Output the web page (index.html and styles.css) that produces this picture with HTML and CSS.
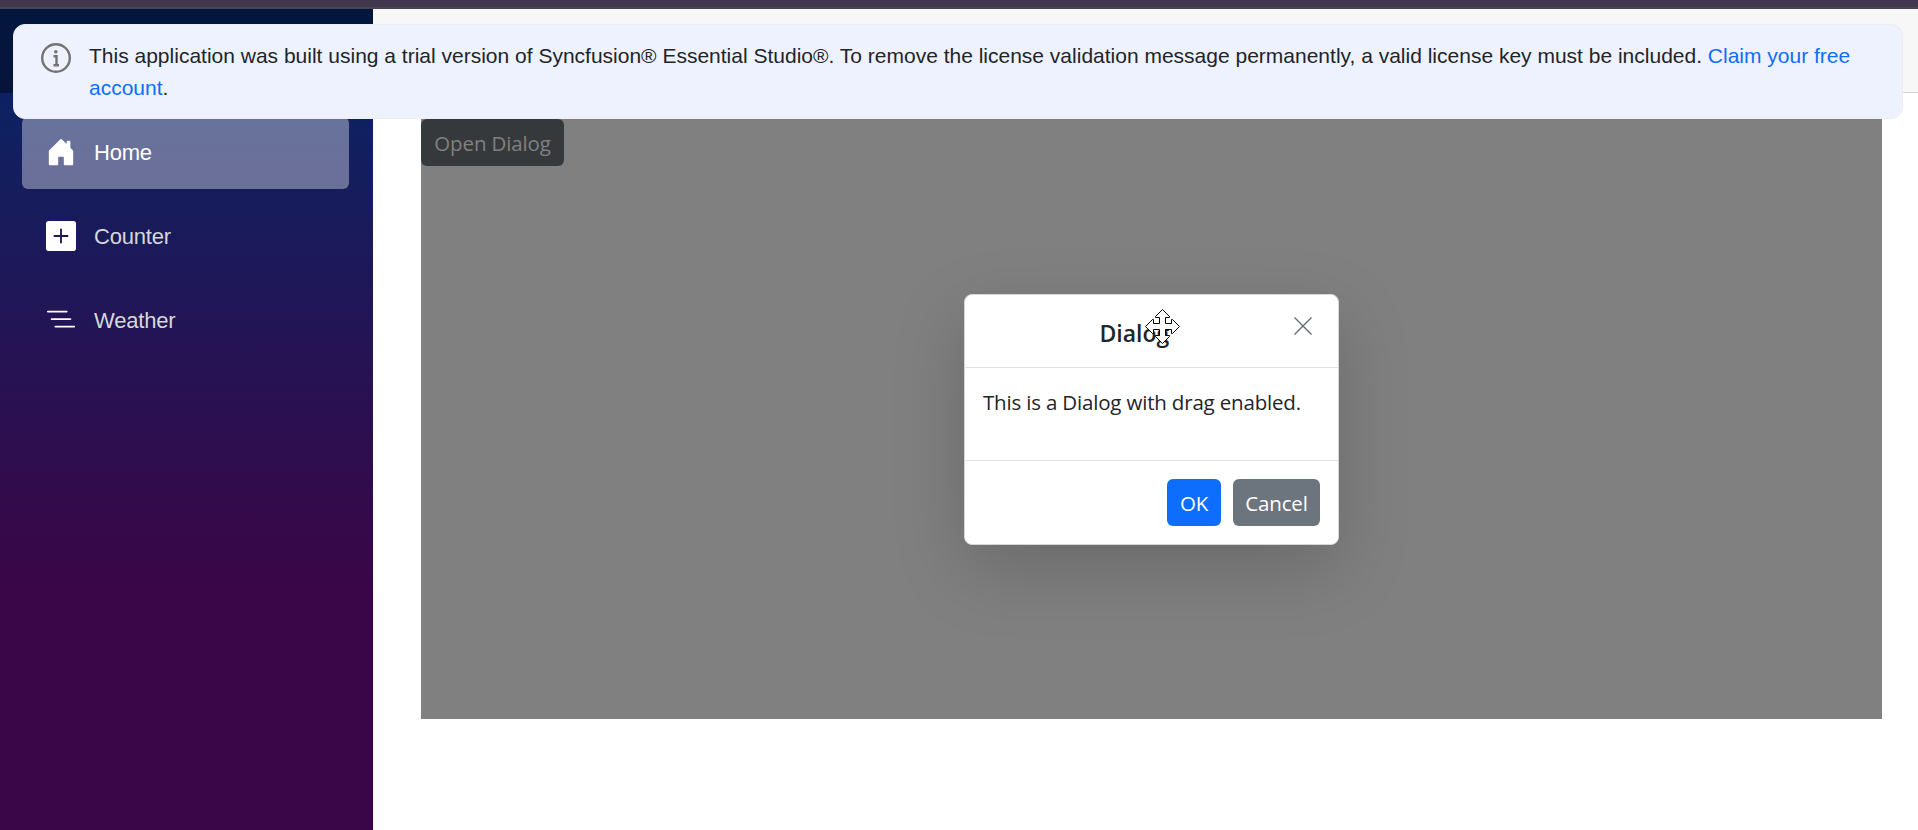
FILE: index.html
```html
<!DOCTYPE html>
<html lang="en">
<head>
<meta charset="utf-8">
<title>Home</title>
<link rel="stylesheet" href="styles.css">
</head>
<body>
<div class="strip"></div>
<div class="page">
  <aside class="sidebar">
    <div class="top-row"></div>
    <nav class="nav">
      <a class="nav-link active">
        <svg class="nav-icon" viewBox="0 0 16 16"><path d="M6.5 14.5v-3.505c0-.245.25-.495.5-.495h2c.25 0 .5.25.5.5v3.5a.5.5 0 0 0 .5.5h4a.5.5 0 0 0 .5-.5v-7a.5.5 0 0 0-.146-.354L13 5.793V2.5a.5.5 0 0 0-.5-.5h-1a.5.5 0 0 0-.5.5v1.293L8.354 1.146a.5.5 0 0 0-.708 0l-6 6A.5.5 0 0 0 1.5 7.5v7a.5.5 0 0 0 .5.5h4a.5.5 0 0 0 .5-.5Z"/></svg>
        <span>Home</span>
      </a>
      <a class="nav-link">
        <svg class="nav-icon" viewBox="0 0 16 16"><path d="M1.500 0A1.500 1.500 0 0 0 0 1.500v13A1.500 1.500 0 0 0 1.500 16h13a1.500 1.500 0 0 0 1.500-1.500v-13A1.500 1.500 0 0 0 14.500 0h-13zm7 4.500v3h3a.5.5 0 0 1 0 1h-3v3a.5.5 0 0 1-1 0v-3h-3a.5.5 0 0 1 0-1h3v-3a.5.5 0 0 1 1 0z"/></svg>
        <span>Counter</span>
      </a>
      <a class="nav-link">
        <svg class="nav-icon" viewBox="0 0 16 16"><path fill-rule="evenodd" d="M4.5 11.500A.5.5 0 0 1 5 11h10a.5.5 0 0 1 0 1H5a.5.5 0 0 1-.5-.5zm-2-4A.5.5 0 0 1 3 7h10a.5.5 0 0 1 0 1H3a.5.5 0 0 1-.5-.5zm-2-4A.5.5 0 0 1 1 3h10a.5.5 0 0 1 0 1H1a.5.5 0 0 1-.5-.5z"/></svg>
        <span>Weather</span>
      </a>
    </nav>
  </aside>
  <main class="main">
    <div class="header"></div>
    <section class="target">
      <button class="btn open-btn"><span>Open Dialog</span></button>
      <div class="overlay">
        <div class="dialog">
          <header class="dialog-header">
            <h2 class="dialog-title">Dialog</h2>
            <svg class="close" viewBox="0 0 18 18"><path d="M.5.5l17 17M17.500.5l-17 17"/></svg>
            <svg class="cursor" viewBox="0 0 35 35"><path d="M17.500.5L24.500 7.500V8.500H20.500V14.500H26.500V10.500H27.500L34.500 17.500L27.500 24.500H26.500V20.500H20.500V26.500H24.500V27.500L17.500 34.500L10.500 27.500V26.500H14.500V20.500H8.500V24.500H7.500L.5 17.500L7.500 10.500H8.500V14.500H14.500V8.500H10.500V7.500Z"/></svg>
          </header>
          <div class="dialog-body"><span class="body-text">This is a Dialog with drag enabled.</span></div>
          <footer class="dialog-footer">
            <button class="btn primary"><span>OK</span></button>
            <button class="btn secondary"><span>Cancel</span></button>
          </footer>
        </div>
      </div>
    </section>
  </main>
</div>
<div class="banner">
  <svg class="info" viewBox="0 0 30 30"><circle cx="15" cy="15" r="13.800"/><path d="M12.500 13.200h3v9M12.500 22.200h5.500"/><circle class="dot" cx="14.800" cy="8.800" r="1.800"/></svg>
  <p class="banner-text">This application was built using a trial version of Syncfusion® Essential Studio®. To remove the license validation message permanently, a valid license key must be included. <a class="link">Claim your free<br>account</a>.</p>
</div>
</body>
</html>
```
FILE: styles.css
```css
* { box-sizing: border-box; }
body {
  margin: 0;
  height: 830px;
  overflow: hidden;
  position: relative;
  display: flex;
  flex-direction: column;
  background: #fff;
  color: #212529;
  font-family: "Liberation Sans", Arial, sans-serif;
}
.strip {
  height: 9px;
  flex: none;
  background: #41384d;
  border-bottom: 2px solid #474350;
}
.page { flex: 1; display: flex; min-height: 0; }
.sidebar {
  width: 373px;
  flex: none;
  background: linear-gradient(180deg, #052767 0%, #3a0647 70%);
}
.top-row { height: 84px; background: rgba(0, 0, 0, 0.4); }
.nav {
  display: flex;
  flex-direction: column;
  gap: 12px;
  padding: 24px 24px 0 22px;
}
.nav-link {
  height: 72px;
  display: flex;
  align-items: center;
  gap: 18px;
  padding: 0 24px;
  border-radius: 6px;
  color: #d7d7d7;
  font-size: 22px;
  letter-spacing: -0.2px;
}
.nav-link.active { background: rgba(255, 255, 255, 0.37); color: #fff; }
.nav-icon { width: 30px; height: 30px; fill: #fff; position: relative; top: -1px; }

.main { flex: 1; display: flex; flex-direction: column; }
.header {
  height: 84px;
  flex: none;
  background: #f7f7f7;
  border-bottom: 1px solid #d6d5d5;
}
.target {
  height: 600px;
  margin: 26px 36px 0 48px;
  position: relative;
  background: #808080;
}
.btn {
  height: 47px;
  display: flex;
  align-items: center;
  justify-content: center;
  padding: 0;
  border: 0;
  border-radius: 6px;
  color: #fff;
  font: 20.5px/30px "Open Sans", "Noto Sans", sans-serif;
  letter-spacing: -0.15px;
}
.open-btn { width: 143px; background: #36393c; color: #808080; }
.overlay {
  position: absolute;
  inset: 0;
  display: flex;
  align-items: center;
  justify-content: center;
  padding-top: 1px;
}
.dialog {
  width: 375px;
  height: 251px;
  display: flex;
  flex-direction: column;
  background: #fff;
  border: 1px solid #d4d8dc;
  border-radius: 8px;
  box-shadow: 0 24px 72px rgba(0, 0, 0, 0.175);
  font-family: "Open Sans", "Noto Sans", sans-serif;
}
.dialog-header {
  height: 73px;
  position: relative;
  display: flex;
  align-items: flex-start;
  justify-content: space-between;
  padding: 22px 26px 0 134.5px;
  border-bottom: 1px solid #dee2e6;
}
.dialog-title { margin: 0; font-size: 23px; line-height: 32px; font-weight: 600; }
.close { width: 18px; height: 18px; fill: none; stroke: #5f6a72; stroke-width: 1.3; }
.cursor {
  position: absolute;
  left: 180px;
  top: 14px;
  width: 35px;
  height: 35px;
  fill: #fff;
  stroke: #000;
  stroke-width: 1;
}
.dialog-body {
  height: 93px;
  padding: 18px;
  font-size: 20.5px;
  line-height: 32px;
  letter-spacing: -0.18px;
  white-space: nowrap;
  border-bottom: 1px solid #dee2e6;
}
.dialog-footer {
  flex: 1;
  display: flex;
  align-items: flex-start;
  justify-content: flex-end;
  gap: 12px;
  padding: 18px;
}
.primary { width: 54px; background: #0d6efd; }
.secondary { width: 87px; background: #6c757d; }

.banner {
  position: absolute;
  left: 13px;
  top: 24px;
  width: 1890px;
  height: 95px;
  display: flex;
  gap: 18px;
  padding: 15px 27px;
  background: #eef2ff;
  border: 1px solid #ebedf3;
  border-radius: 12px;
}
.info { width: 30px; height: 30px; flex: none; margin-top: 3px; fill: none; stroke: #737373; stroke-width: 2.4; }
.dot { fill: #737373; stroke: none; }
.banner-text { margin: 0; font-size: 21px; line-height: 32px; white-space: nowrap; }
.link { color: #0d6efd; }
```
